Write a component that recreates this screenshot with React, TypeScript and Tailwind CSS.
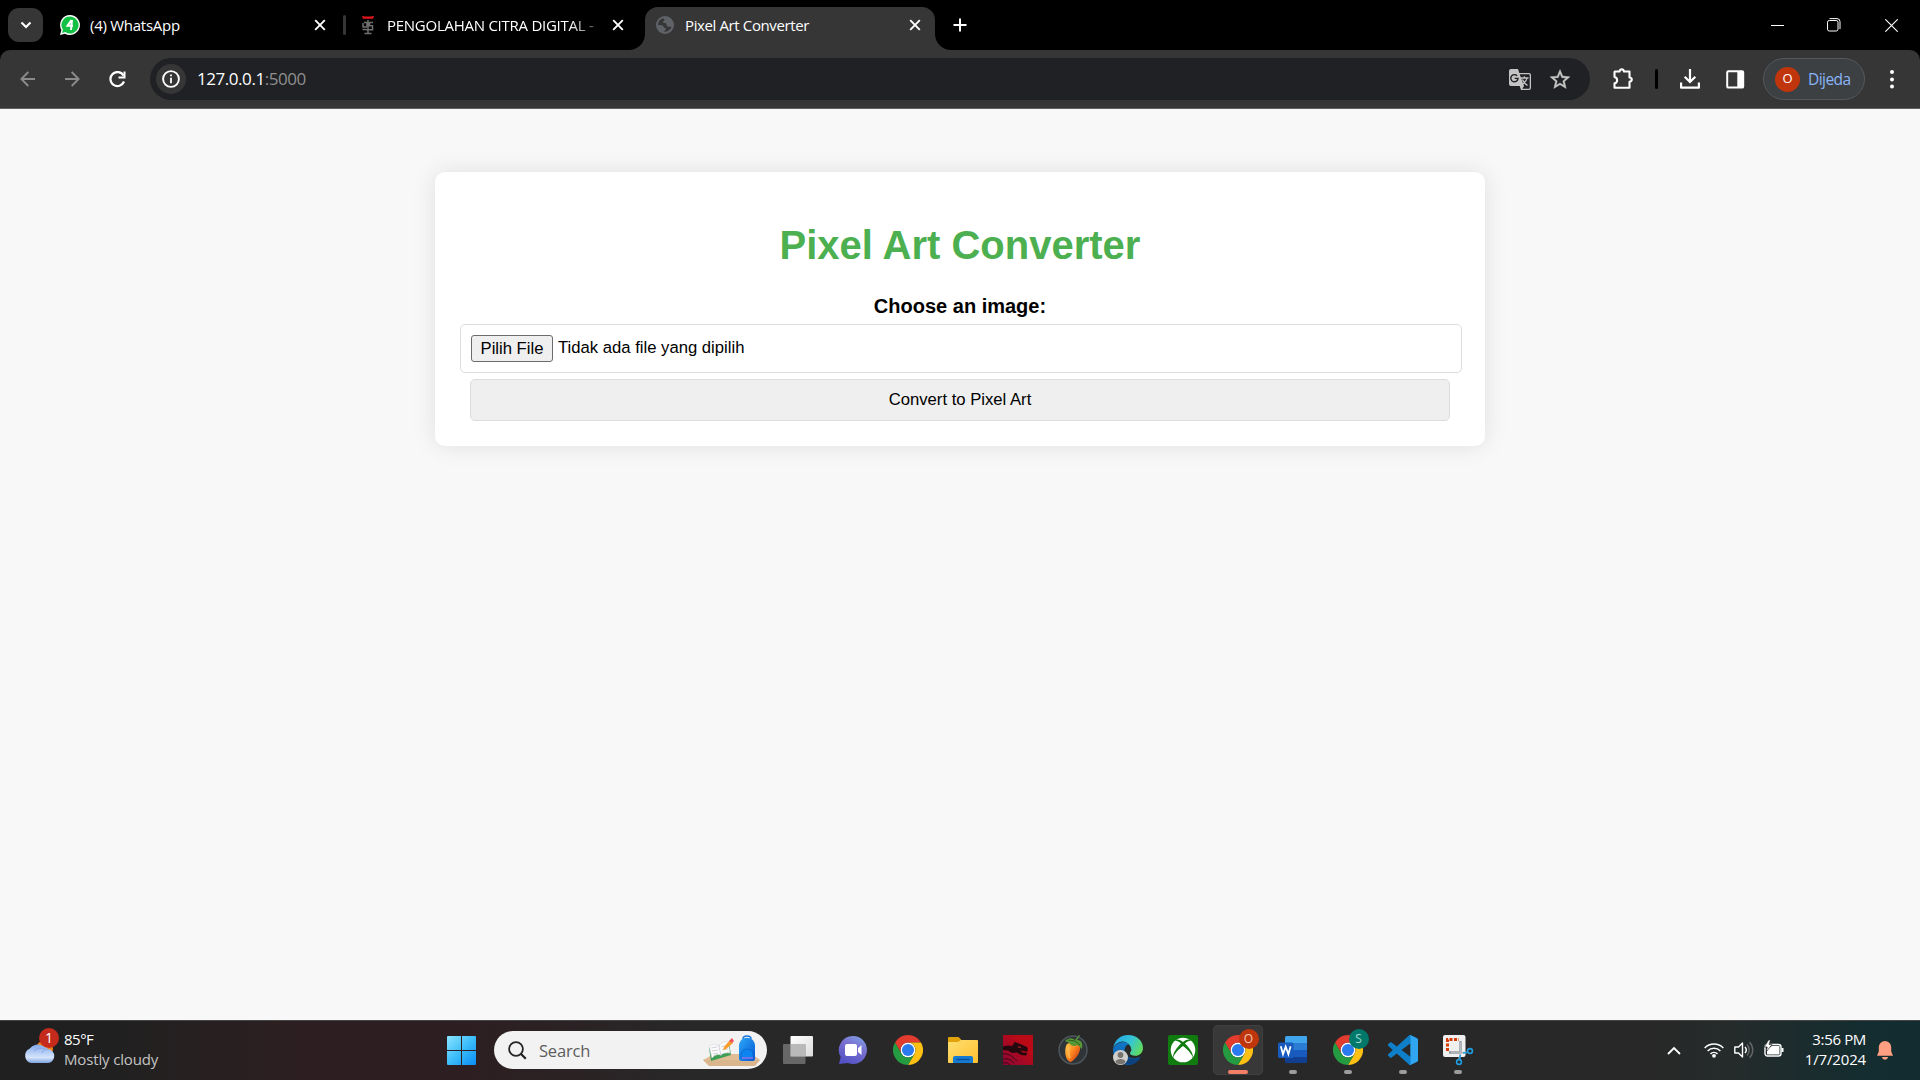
import type { ReactNode } from "react";

const segoe = "font-['Open_Sans','Noto_Sans',sans-serif]";

function CloseX() {
  return (
    <svg width="12" height="12" viewBox="0 0 12 12" className="shrink-0">
      <path d="M1.2 1.2l9.6 9.6M10.8 1.2L1.2 10.8" stroke="#fff" strokeWidth="1.9" />
    </svg>
  );
}

function ChromeLogo() {
  return (
    <svg width="30" height="30" viewBox="0 0 48 48">
      <circle cx="24" cy="24" r="12" fill="#fff" />
      <path d="M24,12H44.7812a23.9939,23.9939,0,0,0-41.5639.0029L13.6079,30l.0093-.0024A11.9852,11.9852,0,0,1,24,12Z" fill="#e33b2e" />
      <path d="M34.3913,30.0029,24.0007,48A23.994,23.994,0,0,0,44.78,12.0031H23.9989l-.0025.0093A11.985,11.985,0,0,1,34.3913,30.0029Z" fill="#fcc114" />
      <path d="M13.6086,30.0031,3.218,12.006A23.994,23.994,0,0,0,24.0025,48L34.3931,30.0029l-.0067-.0068a11.9852,11.9852,0,0,1-20.7778.007Z" fill="#249a41" />
      <circle cx="24" cy="24" r="9.7" fill="#2a7bf0" />
    </svg>
  );
}

function TabStrip() {
  return (
    <div className="flex h-[50px] w-full items-start bg-black text-white">
      <div className="ml-2 mt-2 flex h-[34px] w-[35px] items-center justify-center rounded-[11px] bg-[#363636]">
        <svg width="12" height="8" viewBox="0 0 12 8">
          <path d="M1.5 1.5L6 6l4.500-4.500" fill="none" stroke="#fff" strokeWidth="2.1" />
        </svg>
      </div>

      <div className="flex h-[50px] w-[300px] items-center pl-[17px]">
        <svg width="20" height="20" viewBox="0 0 20 20" className="shrink-0">
          <path d="M10 0A10 10 0 0 0 1.400 15L0 20l5-1.300A10 10 0 1 0 10 0z" fill="#fff" />
          <path d="M10 1.500A8.500 8.500 0 0 0 2.900 14.700L2 18l3.400-.9A8.500 8.500 0 1 0 10 1.500z" fill="#12c143" />
          <path d="M11.500 5L7.500 10.800H13M12 5L11 15" fill="none" stroke="#fff" strokeWidth="2" />
        </svg>
        <span className="-mt-px ml-[10px] w-[160px] whitespace-nowrap text-[15px] leading-5 tracking-[-0.27px]">(4) WhatsApp</span>
        <span className="ml-[64px]"><CloseX /></span>
      </div>

      <div className="mt-[15px] h-5 w-[3px] rounded bg-[#363636]" />

      <div className="flex h-[50px] w-[299px] items-center pl-[15px]">
        <svg width="14" height="20" viewBox="0 0 14 20" className="shrink-0">
          <path d="M1 .8l3 .8h6l3-.8-1 3H2z" fill="#e3141c" />
          <path d="M7 5v13M3.500 18.500h7M3 7.500h3v4M2 8v4h4M8 7.500h4M8.500 7.500v3.200h3v4H5M1.500 14.500H5" fill="none" stroke="#6f6f6f" strokeWidth="1.500" />
        </svg>
        <span className="-mt-px ml-[12px] w-[212px] shrink-0 whitespace-nowrap text-[15px] leading-5 tracking-[-0.26px] [mask-image:linear-gradient(to_right,#000_86%,transparent_104%)]">
          PENGOLAHAN CITRA DIGITAL -
        </span>
        <span className="ml-[13px]"><CloseX /></span>
      </div>

      <div className="relative mt-[7px] flex h-[43px] w-[290px] items-center rounded-t-[13px] bg-[#363636] pb-[7px]">
        <svg className="absolute -left-[16px] bottom-0" width="16" height="16" viewBox="0 0 16 16"><path d="M16 0v16H0A16 16 0 0 0 16 0z" fill="#363636" /></svg>
        <svg className="absolute -right-[16px] bottom-0" width="16" height="16" viewBox="0 0 16 16"><path d="M0 0v16h16A16 16 0 0 1 0 0z" fill="#363636" /></svg>
        <svg width="18" height="18" viewBox="0 0 18 18" className="ml-[11px] shrink-0">
          <circle cx="9" cy="9" r="9" fill="#5f6368" />
          <path d="M7.500 2.200C4 3 2 6 2 9.300c1.800-.3 3.400-.3 4.600.4 1.200.7.8 1.600 2 2 1.300.4 1.500 1 .8 2.300-.5.800-1.200 1.300-1.600 1.800 3.500.4 6.800-1.700 7.900-5.200-1.800.4-3.800.3-4.700-.7-.8-.9 0-2-1-2.600-1.200-.5-2.700.2-3-1-.3-1.300 1.500-1 1.500-2.200 0-.8-.8-1.200-1-1.900z" fill="#363636" />
        </svg>
        <span className="-mt-px ml-[11px] w-[180px] whitespace-nowrap text-[15px] leading-5 tracking-[-0.38px]">Pixel Art Converter</span>
        <span className="ml-[44px]"><CloseX /></span>
      </div>

      <svg width="14" height="14" viewBox="0 0 14 14" className="ml-[18px] mt-[18px]">
        <path d="M7 .5v13M.5 7h13" stroke="#fff" strokeWidth="2" />
      </svg>

      <div className="ml-auto mr-[22px] mt-[18px] flex items-center">
        <svg width="13" height="13" viewBox="0 0 13 13"><path d="M0 6.500h13" stroke="#fff" strokeWidth="1" /></svg>
        <svg width="14" height="14" viewBox="0 0 14 14" className="ml-[43px]">
          <rect x=".5" y="2.500" width="10.500" height="10.500" rx="1.800" fill="none" stroke="#fff" />
          <path d="M2.500.6H10a3 3 0 0 1 3 3V11" fill="none" stroke="#fff" />
        </svg>
        <svg width="13" height="13" viewBox="0 0 13 13" className="ml-[44px]"><path d="M.3.3l12.400 12.400M12.700.3L.3 12.700" stroke="#fff" strokeWidth="1.100" /></svg>
      </div>
    </div>
  );
}

function Toolbar() {
  return (
    <div className="h-[59px] w-full bg-black">
      <div className="flex h-[59px] w-full items-center rounded-t-[10px] border-b border-[#646062] bg-[#363636]">
        <svg width="16" height="16" viewBox="0 0 16 16" className="ml-5"><path d="M15 8H1.500M8.300 1L1.400 8l6.900 7" fill="none" stroke="#8b8b8b" strokeWidth="1.900" /></svg>
        <svg width="16" height="16" viewBox="0 0 16 16" className="ml-[28px]"><path d="M1 8h13.500M7.700 1l6.900 7-6.900 7" fill="none" stroke="#8b8b8b" strokeWidth="1.900" /></svg>
        <svg width="17" height="17" viewBox="0 0 17 17" className="ml-[29px]">
          <path d="M14.600 4.700A7 7 0 1 0 15 10.500" fill="none" stroke="#fff" strokeWidth="2.200" />
          <path d="M16.500.5v7h-7v-2h5v-5z" fill="#fff" />
        </svg>

        <div className="ml-[24px] flex h-[42px] w-[1440px] items-center rounded-full bg-[#202124]">
          <div className="ml-[6px] flex h-[30px] w-[30px] items-center justify-center rounded-full bg-[#363636]">
            <svg width="18" height="18" viewBox="0 0 18 18">
              <circle cx="9" cy="9" r="7.900" fill="none" stroke="#fff" strokeWidth="1.900" />
              <path d="M9 4.400v1.900M9 7.800v5.500" stroke="#fff" strokeWidth="1.800" />
            </svg>
          </div>
          <span className="ml-[11px] whitespace-nowrap text-[17px] leading-6 tracking-[-0.45px] text-white">
            127.0.0.1<span className="text-[#8f8f8f]">:5000</span>
          </span>
          <svg width="22" height="22" viewBox="0 0 22 22" className="ml-auto mt-px">
            <path d="M2 0h7l1.300 4H20a2 2 0 0 1 2 2v13a2 2 0 0 1-2 2h-8l-1.300-4H2a2 2 0 0 1-2-2V2a2 2 0 0 1 2-2z" fill="#c4c4c4" />
            <path d="M10.700 5.300H20a.7.700 0 0 1 .7.700v13a.7.700 0 0 1-.7.700h-6.700l1.700-2.700z" fill="#202124" />
            <path d="M11.500 9h8M15.400 7.300V9M18 9c-.5 3-2.500 5-5 6.500M13.500 10.500c1 2.500 3 4.500 5 6" fill="none" stroke="#c4c4c4" strokeWidth="1.300" />
            <path d="M8.100 6.800A3.600 3.600 0 1 0 9 9.400H5.700" fill="none" stroke="#202124" strokeWidth="1.400" />
          </svg>
          <svg width="20" height="20" viewBox="2 2 20 19" className="ml-[19px] mr-[20px]">
            <path d="M22 9.240l-7.190-.62L12 2 9.190 8.630 2 9.240l5.460 4.730L5.820 21 12 17.270 18.180 21l-1.630-7.030L22 9.240zM12 15.400l-3.760 2.270 1-4.280-3.320-2.880 4.380-.38L12 6.100l1.710 4.040 4.380.38-3.320 2.880 1 4.280L12 15.400z" fill="#c7c7c7" stroke="#c7c7c7" strokeWidth=".4" />
          </svg>
        </div>

        <svg width="22" height="22" viewBox="0 0 22 22" className="ml-[22px]">
          <path d="M3 3.500h4.500C8 .7 11.500.7 12 3.500h5.500v6c3 .2 3 4 0 4.300v6H2.500v-4.500c3.500-.6 3.500-5.600 0-6.300V4z" fill="none" stroke="#fff" strokeWidth="2.100" strokeLinejoin="round" />
        </svg>
        <div className="ml-[21px] h-5 w-[3px] rounded-sm bg-black" />
        <svg width="20" height="20" viewBox="0 0 20 20" className="ml-[22px]">
          <path d="M10 0v12.500M4.700 7.700l5.300 5.300 5.300-5.300" fill="none" stroke="#fff" strokeWidth="2.200" />
          <path d="M1.100 13.500V18.700h17.800v-5.200" fill="none" stroke="#fff" strokeWidth="2.200" strokeLinejoin="round" />
        </svg>
        <svg width="19" height="19" viewBox="0 0 19 19" className="ml-[26px] mt-px">
          <rect x="1.200" y="1.200" width="16" height="16.400" rx="1.200" fill="none" stroke="#fff" strokeWidth="2" />
          <path d="M11.300 1h6v16.500h-6z" fill="#fff" />
        </svg>
        <div className="ml-[18px] flex h-[42px] w-[102px] items-center rounded-full border border-[#55585c] bg-[#3c4043]">
          <div className="ml-[11px] flex h-[25px] w-[25px] items-center justify-center rounded-full bg-[#c1350c] text-[13px] text-white">O</div>
          <span className="-mt-px ml-2 text-[15.500px] leading-5 tracking-[-0.55px] text-[#8ab4f8]">Dijeda</span>
        </div>
        <svg width="4" height="19" viewBox="0 0 4 19" className="ml-[25px]">
          <circle cx="2" cy="2" r="2" fill="#fff" /><circle cx="2" cy="9.500" r="2" fill="#fff" /><circle cx="2" cy="16.500" r="2" fill="#fff" />
        </svg>
      </div>
    </div>
  );
}

function ConverterPage() {
  return (
    <main className="flex-1 bg-[#f8f8f8] pt-[63px] font-['Liberation_Sans',Arial,sans-serif] text-black">
      <section className="mx-auto flex h-[274px] w-[1050px] flex-col rounded-[10px] bg-white px-[25px] pt-[50px] shadow-[0_0_25px_rgba(0,0,0,0.1)]">
        <h1 className="text-center text-[40px] font-bold leading-[46px] text-[#4caf50]">Pixel Art Converter</h1>
        <label className="mt-[26px] block text-center text-[20px] font-bold leading-[24px]">Choose an image:</label>
        <div className="mt-[6px] flex h-[49px] w-[1002px] shrink-0 items-center rounded-[5px] border border-[#ddd] pl-[10px]">
          <button className="h-[27px] w-[82px] rounded-[3px] border border-[#6b6b6b] bg-[#efefef] text-[16.67px] leading-[25px]">Pilih File</button>
          <span className="ml-[5px] text-[16.67px] leading-5 -mt-[2px]">Tidak ada file yang dipilih</span>
        </div>
        <button className="mx-[10px] mt-[6px] h-[42px] shrink-0 rounded-[5px] border border-[#ddd] bg-[#efefef] text-[16.67px] leading-5">Convert to Pixel Art</button>
      </section>
    </main>
  );
}

function TaskItem({ children, indicator }: { children: ReactNode; indicator?: "active" | "open" }) {
  return (
    <div className="flex h-[60px] w-[55px] shrink-0 items-center justify-center">
      <div className={indicator === "active" ? "relative flex h-[50px] w-[50px] items-center justify-center rounded-[5px] bg-[#383838] shadow-[inset_0_0_0_1px_#404040]" : "relative flex h-[50px] w-[50px] items-center justify-center"}>
        {children}
        {indicator === "active" && <span className="absolute bottom-[1px] left-[15px] h-1 w-5 rounded-full bg-[#f47f67]" />}
        {indicator === "open" && <span className="absolute bottom-[1px] left-[21px] h-1 w-2 rounded-full bg-[#9c9c9c]" />}
      </div>
    </div>
  );
}

function Taskbar() {
  return (
    <footer className="flex h-[60px] w-full shrink-0 items-center bg-[linear-gradient(to_right,#202020_0px,#212020_120px,#2d1f21_300px,#2d1e21_460px,#282828_700px,#282828_1650px,#252b2b_1730px,#132d30_1870px,#122c2f_1920px)] text-white shadow-[inset_0_1px_0_#454545]">
      <div className="flex w-[439px] shrink-0 items-center pl-[25px]">
        <div className="relative h-[40px] w-[39px]">
          <svg width="34" height="40" viewBox="0 0 34 40" className="-ml-px">
            <defs>
              <linearGradient id="cloud" x1="0" y1="0" x2="0" y2="1"><stop offset="0" stopColor="#82a9ec" /><stop offset=".7" stopColor="#d5e4fb" /><stop offset="1" stopColor="#7ea3e0" /></linearGradient>
            </defs>
            <circle cx="20.500" cy="19" r="8.500" fill="#f58216" />
            <path d="M7.500 33a7.500 7.500 0 0 1-2-14.200A10 10 0 0 1 19 16a8 8 0 0 1 4.500 3A7 7 0 1 1 23 33z" fill="url(#cloud)" />
            <path d="M10 21a11 11 0 0 1 11-2M24 19c-3 0-5 1.500-6 4" stroke="#89aae5" fill="none" />
          </svg>
          <span className="absolute -top-[2px] left-[14px] flex h-5 w-5 items-center justify-center rounded-full bg-[#c42b1c] text-[14px] leading-5">1</span>
        </div>
        <div className="-mt-[2px] flex flex-col text-[15px] leading-5">
          <span className="tracking-[-0.5px]">85°F</span>
          <span className="tracking-[-0.15px] text-[#c4c4c4]">Mostly cloudy</span>
        </div>
      </div>

      <svg width="29" height="29" viewBox="0 0 29 29" className="ml-[8px] shrink-0">
        <defs><linearGradient id="win" x1="0" y1="0" x2="1" y2="1"><stop offset="0" stopColor="#8be5ff" /><stop offset=".5" stopColor="#3cbdfa" /><stop offset="1" stopColor="#0a8cf5" /></linearGradient></defs>
        <path d="M1 0h13v14H0V1a1 1 0 0 1 1-1zM15 0h13a1 1 0 0 1 1 1v13H15zM0 15h14v14H1a1 1 0 0 1-1-1zM15 15h14v13a1 1 0 0 1-1 1H15z" fill="url(#win)" />
      </svg>

      <div className="ml-[18px] flex h-[38px] w-[273px] shrink-0 items-center rounded-full bg-[#f2f2f2]">
        <svg width="19" height="19" viewBox="0 0 19 19" className="ml-[14px]">
          <circle cx="8" cy="8" r="6.900" fill="none" stroke="#252525" strokeWidth="1.800" />
          <path d="M12.800 12.800l5 5" stroke="#202020" strokeWidth="2.200" />
        </svg>
        <span className="ml-[12px] mt-[2px] text-[16.500px] leading-6 tracking-[-0.2px] text-[#5d5d5d]">Search</span>
        <svg width="57" height="34" viewBox="0 0 57 34" className="ml-auto mr-[7px] mt-[3px]">
          <defs><linearGradient id="bag" x1="0" y1="0" x2="1" y2="1"><stop offset="0" stopColor="#2ba8f8" /><stop offset="1" stopColor="#0758d4" /></linearGradient></defs>
          <path d="M0 25l11-6h38l8 6-5 5H6z" fill="#e0bd94" />
          <path d="M0 25h57l-5 6H6z" fill="#d9b68e" />
          <path d="M6 13l20-5 2 12-20 6z" fill="#3f9e55" />
          <path d="M6 11c4-2 8-2 10 0 2-3 5-5 9-4l2 11c-4-.5-7 0-9 2-3-1-6-.5-9 3z" fill="#fbfbfb" stroke="#d7d5df" strokeWidth=".6" />
          <path d="M16 11l2 10M8 13l6-1M9 16l6-1M10 19l5-1M18 12l6-2M19 15l6-1" stroke="#c3bdcc" strokeWidth=".7" />
          <path d="M21 12l6-7 3 3-7 6-3 1z" fill="#fa9d2c" /><path d="M26 6l3-3 2 3-2 2z" fill="#ee545d" />
          <path d="M40 4c0-4 8-4 8 0" fill="none" stroke="#1675de" strokeWidth="1.500" />
          <path d="M36 11c0-11 16-11 16 0v13c0 2-2 2-3 2H39c-2 0-3-1-3-2z" fill="url(#bag)" />
          <path d="M38 20c0-8 12-8 12 0v3H38z" fill="#0c83ee" stroke="#065bc8" strokeWidth=".6" /><path d="M39 23h11" stroke="#a575f5" strokeWidth="1.300" />
        </svg>
      </div>

      <div className="ml-[3px] flex">
        <TaskItem>
          <svg width="30" height="28" viewBox="0 0 30 28">
            <defs><linearGradient id="tv" x1="0" y1="0" x2="1" y2="1"><stop offset="0" stopColor="#fff" /><stop offset="1" stopColor="#dcdcdc" /></linearGradient></defs>
            <rect x="7.500" y="0" width="22.500" height="20.500" rx="1" fill="url(#tv)" />
            <rect x="0" y="8" width="22.500" height="20" rx="1" fill="#777" opacity=".8" />
            <path d="M7.500 8h15v12.500h-15z" fill="#b9b9b9" />
          </svg>
        </TaskItem>
        <TaskItem>
          <svg width="30" height="30" viewBox="0 0 30 30">
            <defs><linearGradient id="chat" x1=".8" y1="0" x2=".3" y2="1"><stop offset="0" stopColor="#7fa0e6" /><stop offset=".4" stopColor="#7a70cf" /><stop offset="1" stopColor="#5251c5" /></linearGradient></defs>
            <path d="M15 1a14 14 0 1 1-5 27.100L1 29l1.700-7A14 14 0 0 1 15 1z" fill="url(#chat)" />
            <rect x="7" y="9" width="12" height="12" rx="2" fill="#fff" /><path d="M20 13.200l3.500-3.200v10L20 17z" fill="#fff" />
          </svg>
        </TaskItem>
        <TaskItem><ChromeLogo /></TaskItem>
        <TaskItem>
          <svg width="30" height="26" viewBox="0 0 30 26">
            <defs><linearGradient id="fold" x1="0" y1="0" x2="1" y2="1"><stop offset="0" stopColor="#ffdf71" /><stop offset="1" stopColor="#fec02e" /></linearGradient></defs>
            <path d="M0 1a1 1 0 0 1 1-1h9.500l3 3H28a2 2 0 0 1 2 2v4H0z" fill="#e2a20c" />
            <path d="M0 5h10l3-2h16a1 1 0 0 1 1 1v21a1 1 0 0 1-1 1H1a1 1 0 0 1-1-1z" fill="url(#fold)" />
            <path d="M5 26v-5a2 2 0 0 1 2-2h16a2 2 0 0 1 2 2v5z" fill="#147bd1" /><path d="M8.500 22.500h13" stroke="#0b4c98" strokeWidth="1.300" />
          </svg>
        </TaskItem>
        <TaskItem>
          <svg width="30" height="30" viewBox="0 0 30 30">
            <defs><linearGradient id="kali" x1="0" y1="1" x2=".7" y2=".3"><stop offset="0" stopColor="#8c0635" /><stop offset="1" stopColor="#b90a16" /></linearGradient></defs>
            <path d="M0 0h30v30H0z" fill="url(#kali)" />
            <path d="M0 11.500l5-1 4 .5 2.500-3-1-1.500 4 1.500 5 2 4.500 2 1 3-1.500 2-2-1-4-.5 2 2 5 .5-1.500 2.500-5-.5-4-2.500-5 .5-4-2.500L0 15z" fill="#23090d" />
            <path d="M0 19c6-1 10 3 14 7M0 24c5-1 8 1 11 4M0 28c3-1 5 0 7 2" stroke="#3c0919" fill="none" />
            <path d="M15 12l3 .4" stroke="#c9212a" />
          </svg>
        </TaskItem>
        <TaskItem>
          <svg width="30" height="30" viewBox="0 0 30 30">
            <defs><linearGradient id="fl" x1="0" y1="0" x2="1" y2=".8"><stop offset="0" stopColor="#ffd152" /><stop offset=".5" stopColor="#ff8a22" /><stop offset="1" stopColor="#c93912" /></linearGradient></defs>
            <circle cx="15" cy="15" r="14" fill="#2e3438" stroke="#4c555c" strokeWidth="1.500" />
            <path d="M8 11c1-5 12-4 14 1 1 5-4 12-9 15-5 0-7-10-5-16z" fill="url(#fl)" />
            <path d="M11 12c-1 4-1 7 1 11" stroke="#ffc35a" strokeWidth="2" fill="none" opacity=".7" />
            <path d="M7 6c4-4 7-3 10-1l4-5 1 .5L19 5c5 0 6 4 5 9-2-1-2-3-4-4-4 2-7 1-9-2-1-1-2-1-4-2z" fill="#589835" />
            <path d="M10 5l7 1 5 4" stroke="#295d22" fill="none" />
          </svg>
        </TaskItem>
        <TaskItem>
          <svg width="30" height="30" viewBox="0 0 30 30">
            <defs>
              <linearGradient id="edgeA" x1="0" y1=".2" x2="1" y2=".6"><stop offset="0" stopColor="#25a6ec" /><stop offset=".55" stopColor="#34c5d4" /><stop offset="1" stopColor="#61dc5d" /></linearGradient>
              <linearGradient id="edgeB" x1="0" y1="0" x2="0" y2="1"><stop offset="0" stopColor="#1177c7" /><stop offset="1" stopColor="#0b5bab" /></linearGradient>
            </defs>
            <path d="M0 14a11 10 0 0 1 17-5c-4 0-6 4-5 8 2 6 8 8 15 5-3 5-7 8-12 8A15 15 0 0 1 0 15z" fill="url(#edgeB)" />
            <path d="M11 16c1 8 9 10 17 6-3 6-9 9-14 7-4-2-6-8-3-13z" fill="#0c427e" />
            <path d="M.2 13C2 4 8 0 15 0c9 0 15 6 15 13 0 5-4 8-8 7.800-3 0-5-1-5-2.800 0-1 1.500-1.500 1.300-3.500C18 10 14 6 9 6.500 5 7 2 9 .2 13z" fill="url(#edgeA)" />
            <circle cx="7.500" cy="22.500" r="7.500" fill="#d0cfcd" /><circle cx="7.500" cy="20" r="2.900" fill="#77736f" /><path d="M2.500 27c0-4 10-4 10 0-2 3-8 3-10 0z" fill="#77736f" />
          </svg>
        </TaskItem>
        <TaskItem>
          <svg width="30" height="30" viewBox="0 0 30 30">
            <rect width="30" height="30" rx="2" fill="#107c10" />
            <circle cx="15" cy="15" r="12.300" fill="#fff" />
            <path d="M8 4.600c3-.5 5 1 7 2.300 2-1.300 4-2.800 7-2.300l1 1.200c-2.500-.3-4.800 1.400-6 2.600 4 3.800 8.500 9.800 8 14.600-1.400-4.400-5.600-8.700-10-12-4.400 3.300-8.600 7.600-10 12-.5-4.800 4-10.800 8-14.600-1.200-1.200-3.500-2.900-6-2.600z" fill="#107c10" />
          </svg>
        </TaskItem>
        <TaskItem indicator="active">
          <ChromeLogo />
          <span className="absolute left-[26px] top-[4px] flex h-5 w-5 items-center justify-center rounded-full bg-[#bf360c] text-[12px] leading-5 text-[#f6c5b4]">O</span>
        </TaskItem>
        <TaskItem indicator="open">
          <svg width="30" height="28" viewBox="0 0 30 28">
            <path d="M8.500 0H28a1 1 0 0 1 1 1v6H7V1.500A1.500 1.500 0 0 1 8.500 0z" fill="#41a5ee" /><path d="M7 7h22v7H7z" fill="#2b7cd3" /><path d="M7 14h22v7H7z" fill="#185abd" /><path d="M7 21h22v5a1 1 0 0 1-1 1H8.500A1.500 1.500 0 0 1 7 25.500z" fill="#103f91" />
            <rect y="6.500" width="15.500" height="15.500" rx="1.500" fill="#185abd" />
            <path d="M2.800 10.200L5 18.200l2.700-7.600 2.700 7.600 2.200-8" fill="none" stroke="#fff" strokeWidth="1.800" />
          </svg>
        </TaskItem>
        <TaskItem indicator="open">
          <ChromeLogo />
          <span className="absolute left-[26px] top-[4px] flex h-5 w-5 items-center justify-center rounded-full bg-[#00796b] text-[12px] leading-5 text-[#a5dbd3]">S</span>
        </TaskItem>
        <TaskItem indicator="open">
          <svg width="30" height="30" viewBox="0 0 24 24">
            <path d="M23.150 2.587L18.210.21a1.494 1.494 0 0 0-1.705.29l-9.460 8.630-4.120-3.128a.999.999 0 0 0-1.276.057L.327 7.261A1 1 0 0 0 .326 8.740L3.899 12 .326 15.260a1 1 0 0 0 .001 1.479L1.650 17.940a.999.999 0 0 0 1.276.057l4.120-3.128 9.460 8.630a1.492 1.492 0 0 0 1.704.290l4.942-2.377A1.500 1.500 0 0 0 24 20.060V3.939a1.500 1.500 0 0 0-.850-1.352zm-5.146 14.861L10.826 12l7.178-5.448v10.896z" fill="#0f7fc9" />
            <path d="M18.200.2l5 2.400a1.500 1.500 0 0 1 .8 1.300v16.200a1.500 1.500 0 0 1-.8 1.300l-5 2.400c-.6.300-1.200.1-1.700-.3.900.7 1.500.2 1.500-.8V1.300c0-1-.6-1.500-1.500-.8.500-.4 1.100-.6 1.700-.3z" fill="#2fa6ef" />
          </svg>
        </TaskItem>
        <TaskItem indicator="open">
          <svg width="30" height="30" viewBox="0 0 30 30" overflow="visible">
            <rect width="22.500" height="22" rx="2" fill="#f0f0f0" />
            <path d="M4.500 16V4.500H16" fill="none" stroke="#d83b01" strokeWidth="3" strokeDasharray="3 1.500" />
            <path d="M17.500 6v13M6 17.500h12" stroke="#8c959c" strokeWidth="2.400" fill="none" />
            <path d="M17.500 7v11l-1.500 6M8 17.500h16" fill="none" stroke="#b3bac0" strokeWidth="1.500" />
            <circle cx="27" cy="16" r="2.400" fill="none" stroke="#1f9de0" strokeWidth="1.600" /><circle cx="16" cy="27" r="2.400" fill="none" stroke="#1f9de0" strokeWidth="1.600" />
            <path d="M20 18l5-1M17.500 20l-1 5" stroke="#1f9de0" strokeWidth="1.500" />
          </svg>
        </TaskItem>
      </div>

      <div className="ml-auto mr-[27px] flex shrink-0 items-center">
        <svg width="14" height="9" viewBox="0 0 14 9"><path d="M1 8l6-6 6 6" fill="none" stroke="#fff" strokeWidth="1.800" /></svg>
        <svg width="20" height="16" viewBox="0 0 20 16" className="ml-[23px]">
          <path d="M.7 6a13 13 0 0 1 18.600 0M3.600 9a9 9 0 0 1 12.800 0M6.500 11.900a5 5 0 0 1 7 0" fill="none" stroke="#fff" strokeWidth="1.500" /><circle cx="10" cy="13.800" r="1.900" fill="#fff" />
        </svg>
        <svg width="21" height="18" viewBox="0 0 21 18" className="ml-[10px]">
          <path d="M.8 6h3.700L8.500 2v14l-4-4H.8z" fill="none" stroke="#fff" strokeWidth="1.400" strokeLinejoin="round" />
          <path d="M11 6a4.500 4.500 0 0 1 0 6" fill="none" stroke="#fff" strokeWidth="1.400" />
          <path d="M13 3.500a8 8 0 0 1 0 11M15.500 1.200a11 11 0 0 1 0 15.600" fill="none" stroke="#666" strokeWidth="1.400" />
        </svg>
        <svg width="21" height="18" viewBox="0 0 21 18" className="-mt-[2px] ml-[9px]">
          <rect x="1" y="4.500" width="16" height="11.500" rx="2.500" fill="none" stroke="#fff" strokeWidth="1.400" /><path d="M3 9l5-3h7.500v8.500H3z" fill="#fff" /><path d="M17.500 8h2v4h-2z" fill="#fff" />
          <path d="M4.500 0L.3 7h2.900l-1 5L8 4.500H5L6.500 0z" fill="#fff" stroke="#282828" strokeWidth=".7" />
        </svg>
        <div className="-mt-[2px] flex w-[81px] flex-col items-end whitespace-nowrap text-[15px] leading-5">
          <span className="tracking-[-0.35px]">3:56 PM</span>
          <span className="tracking-[-0.15px]">1/7/2024</span>
        </div>
        <svg width="16" height="19" viewBox="0 0 16 19" className="ml-[11px]">
          <path d="M8 0a6.200 6.200 0 0 1 6.200 6v4.500l1.800 4.200H0l1.800-4.200V6A6.200 6.200 0 0 1 8 0zM5 16h6c-.5 3.500-5.500 3.500-6 0z" fill="#ff9e80" />
        </svg>
      </div>
    </footer>
  );
}

export default function App() {
  return (
    <div className={`flex h-[1080px] w-[1920px] flex-col overflow-hidden ${segoe}`}>
      <TabStrip />
      <Toolbar />
      <ConverterPage />
      <Taskbar />
    </div>
  );
}
